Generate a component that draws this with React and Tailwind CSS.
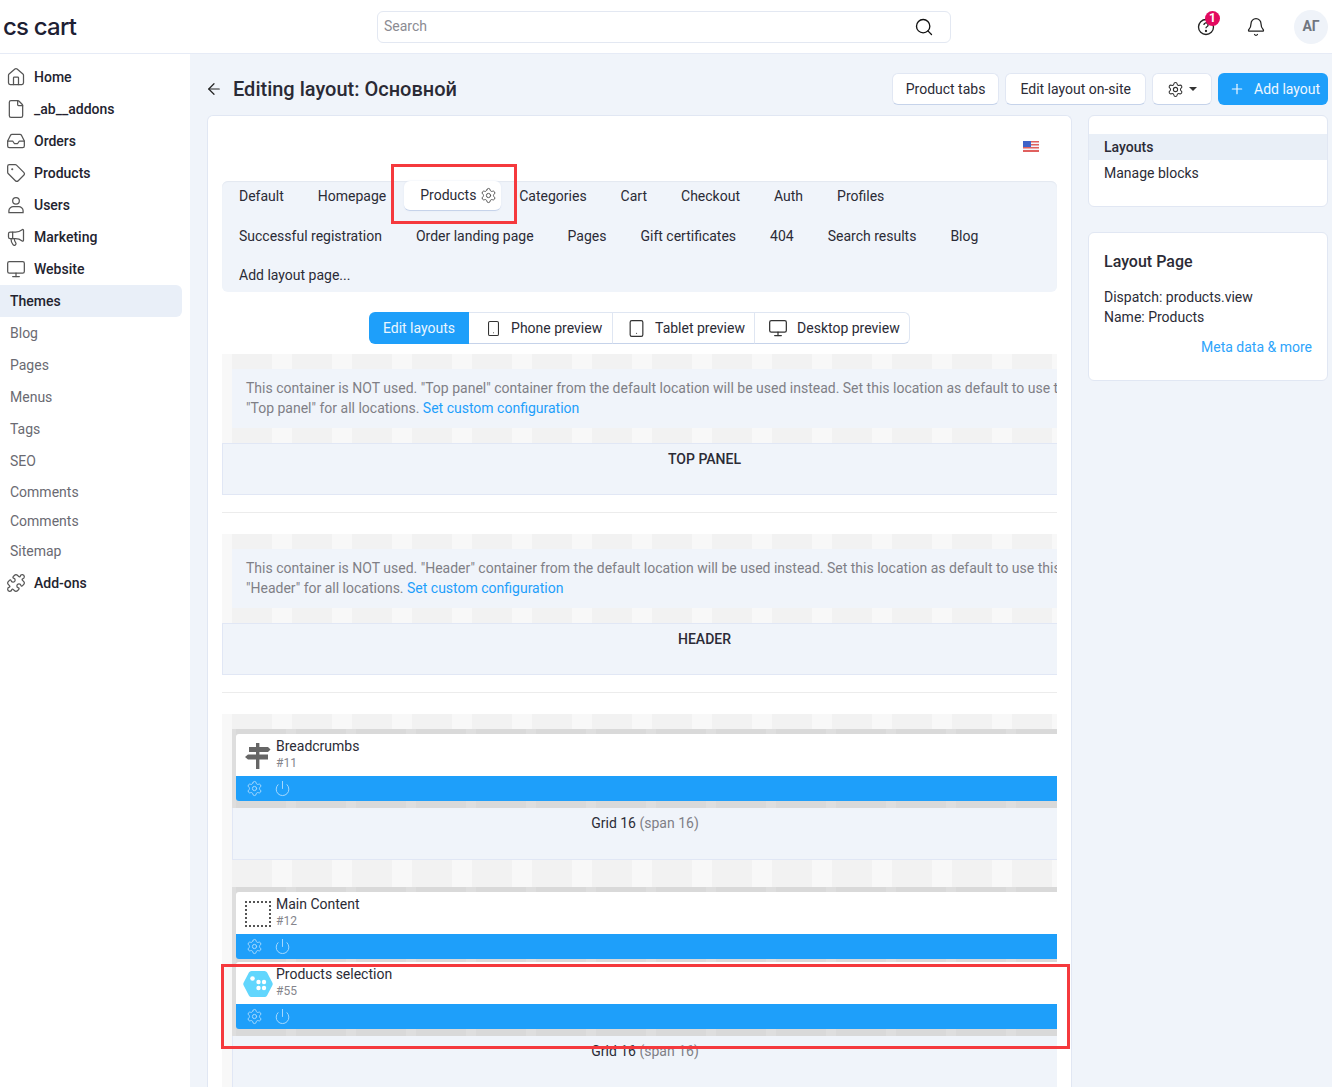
import React from "react";
import { Search, Bell, ArrowLeft, Plus, Settings, Power, House, File, Inbox, Tag, Megaphone, Monitor, Puzzle, Smartphone, Tablet } from "lucide-react";

const UserIcon = (p) => (
  <svg viewBox="0 0 24 24" fill="none" stroke="currentColor" strokeWidth="1.5" {...p}>
    <circle cx="12" cy="7" r="4" />
    <path d="M3.5 21v-2.5c0-2.6 3-4.5 5-4.5h7c2 0 5 1.9 5 4.5V21z" />
  </svg>
);

const HelpIcon = () => (
  <svg viewBox="0 0 24 24" width="20" height="20" fill="none" stroke="#222" strokeWidth="1.6">
    <circle cx="12" cy="12" r="9" />
    <path d="M9.5 9.5a2.5 2.5 0 1 1 3.6 2.2c-.8.4-1.1.9-1.1 1.8" />
    <circle cx="12" cy="16.8" r=".6" fill="#222" />
  </svg>
);

const Signpost = () => (
  <svg viewBox="0 0 28 28" width="28" height="28" fill="#666">
    <rect x="12" y="1" width="3.4" height="26" />
    <path d="M5 5h19l2.5 2.5L24 10H5z" />
    <path d="M24 12.5H4L1 15l3 2.500h20z" />
  </svg>
);

const HexIcon = () => (
  <svg viewBox="0 0 30 28" width="30" height="28">
    <path d="M8.500 1h13a3 3 0 0 1 2.600 1.500l5.200 10a3 3 0 0 1 0 3l-5.200 10a3 3 0 0 1-2.600 1.500h-13a3 3 0 0 1-2.600-1.500l-5.200-10a3 3 0 0 1 0-3l5.200-10A3 3 0 0 1 8.500 1z" fill="#61d6fd" />
    <g fill="#fff">
      <circle cx="9.500" cy="8.500" r="2.300" />
      <circle cx="15.500" cy="12" r="2.200" />
      <circle cx="21" cy="12" r="2.200" />
      <circle cx="15.500" cy="18" r="2.200" />
      <circle cx="21" cy="18" r="2.200" />
    </g>
  </svg>
);

const mainNav = [
  ["Home", House],
  ["_ab__addons", File],
  ["Orders", Inbox],
  ["Products", Tag],
  ["Users", UserIcon],
  ["Marketing", Megaphone],
  ["Website", Monitor],
];

function NavItem({ label, Icon }) {
  return (
    <div className="flex h-8 items-center">
      <Icon width={20} height={20} strokeWidth={1.5} className="ml-[6px] mr-2 shrink-0 text-[#555]" />
      <span className="font-medium text-[#23232f]">{label}</span>
    </div>
  );
}

function SubItem({ label, h = "h-8" }) {
  return <div className={`flex ${h} items-center pl-[10px] text-[#6a6a72]`}>{label}</div>;
}

function Sidebar() {
  return (
    <aside className="w-[190px] shrink-0 bg-white pt-[7px]">
      {mainNav.map(([label, Icon]) => (
        <NavItem key={label} label={label} Icon={Icon} />
      ))}
      <div className="flex h-8 w-[182px] items-center rounded-r-md bg-[#e9eff8] pl-[10px] font-medium text-[#23232f]">Themes</div>
      <SubItem label="Blog" />
      <SubItem label="Pages" />
      <SubItem label="Menus" />
      <SubItem label="Tags" />
      <SubItem label="SEO" />
      <SubItem label="Comments" h="h-[30px]" />
      <SubItem label="Comments" h="h-[28px]" />
      <SubItem label="Sitemap" />
      <NavItem label="Add-ons" Icon={Puzzle} />
    </aside>
  );
}

function Header() {
  return (
    <header className="flex h-[54px] shrink-0 items-center border-b border-[#e6ebf6] bg-white">
      <div className="w-[377px] shrink-0 pl-[3px] font-['Inter',sans-serif] text-[24px] leading-none font-medium tracking-[-0.8px] text-[#1d2033]">cs cart</div>
      <div className="flex h-[32px] w-[574px] shrink-0 items-center justify-between rounded-md border border-[#e3e8f2] pr-4 pl-[6px] text-[#8b8b92]">
        <span>Search</span>
        <Search width={20} height={20} strokeWidth={1.6} className="text-[#111]" />
      </div>
      <div className="ml-auto flex items-center pr-1">
        <div className="relative mr-[30px] flex h-5 w-5 items-center justify-center">
          <HelpIcon />
          <span className="absolute top-[-6px] left-[9px] flex h-[15px] w-[15px] items-center justify-center rounded-full bg-[#e20a5f] text-[12px] leading-none font-bold text-white">1</span>
        </div>
        <Bell width={20} height={20} strokeWidth={1.5} className="mr-7 text-[#222]" />
        <div className="flex h-[34px] w-[34px] items-center justify-center rounded-full bg-[#eff3f9] text-[14px] font-bold text-[#71767f]">АГ</div>
      </div>
    </header>
  );
}

const btn = "flex h-8 items-center rounded-md border border-[#e1e7f3] border-b-[#c6d3ea] bg-white text-[#2b2b36]";

function TitleRow() {
  return (
    <div className="flex h-8 items-center">
      <ArrowLeft width={18} height={18} strokeWidth={1.6} className="mr-[10px] ml-[-2px] text-[#222]" />
      <h1 className="text-[20px] font-medium text-[#2a2a35]">Editing layout: Основной</h1>
      <div className="ml-auto flex gap-[6px]">
        <div className={`${btn} px-[13px]`}>Product tabs</div>
        <div className={`${btn} px-[14px]`}>Edit layout on-site</div>
        <div className={`${btn} w-[60px] justify-center gap-[5px]`}>
          <Settings width={17} height={17} strokeWidth={1.5} className="text-[#333]" />
          <span className="h-0 w-0 border-x-[4px] border-t-[4px] border-x-transparent border-t-[#333]" />
        </div>
        <div className="flex h-8 w-[110px] items-center gap-[9px] rounded-md bg-[#1e9ffa] pl-[11px] text-[#eef7ff]">
          <Plus width={16} height={16} strokeWidth={1.8} />
          <span>Add layout</span>
        </div>
      </div>
    </div>
  );
}

function Flag() {
  return (
    <svg viewBox="0 0 16 11" width="16" height="11">
      <rect width="16" height="11" fill="#f4f4f8" />
      <g fill="#e0605e">
        <rect width="16" height="1.500" />
        <rect y="3" width="16" height="1.500" />
        <rect y="6" width="16" height="1.500" />
        <rect y="9" width="16" height="2" />
      </g>
      <rect width="8" height="6" fill="#3f63c8" />
    </svg>
  );
}

function Tab({ children }) {
  return <div className="flex h-10 items-center px-[17px] pb-[10px] text-[#2b2b36]">{children}</div>;
}

function Tabs() {
  const row1a = ["Default", "Homepage"];
  const row1b = ["Cart", "Checkout", "Auth", "Profiles"];
  const row2 = ["Successful registration", "Order landing page", "Pages", "Gift certificates", "404", "Search results", "Blog"];
  return (
    <div className="relative rounded-md bg-[#f0f4fa] pb-[1px] shadow-[inset_0_1px_1px_#e3e8f0]">
      <div className="flex h-10">
        {row1a.map((t) => <Tab key={t}>{t}</Tab>)}
        <div className="mr-[1px] ml-[1px] flex h-[30px] w-[97px] shrink-0 items-center gap-1 rounded-md border-b border-[#c6d3ea] bg-white pl-4 text-[#2b2b36] shadow-[0_0_2px_#dfe6f2]">
          Products
          <Settings width={17} height={17} strokeWidth={1.4} className="text-[#555]" />
        </div>
        <Tab>Categories</Tab>
        {row1b.map((t) => <Tab key={t}>{t}</Tab>)}
      </div>
      <div className="flex h-10">{row2.map((t) => <Tab key={t}>{t}</Tab>)}</div>
      <div className="flex h-[30px]">
        <div className="flex h-[30px] items-center px-[17px] pb-[1px] text-[#2b2b36]">Add layout page...</div>
      </div>
      <div className="pointer-events-none absolute top-[-17px] left-[169px] h-[60px] w-[126px] border-[3px] border-[#f5393d]" />
    </div>
  );
}

function PreviewSwitch() {
  const item = "flex h-8 items-center gap-[9px] border-y border-r border-[#dfe6f2] border-b-[#c6d3ea] bg-white text-[#2b2b36]";
  return (
    <div className="mt-[20px] flex justify-center">
      <div className="flex h-8 items-center rounded-l-md bg-[#1e9ffa] px-[14px] text-[#eaf6ff]">Edit layouts</div>
      <div className={`${item} w-[144px] pl-4`}>
        <Smartphone width={17} height={17} strokeWidth={1.5} className="text-[#333]" />
        Phone preview
      </div>
      <div className={`${item} w-[142px] pl-[14px]`}>
        <Tablet width={19} height={19} strokeWidth={1.5} className="text-[#333]" />
        Tablet preview
      </div>
      <div className={`${item} w-[155px] rounded-r-md pl-[13px]`}>
        <Monitor width={20} height={20} strokeWidth={1.5} className="text-[#333]" />
        Desktop preview
      </div>
    </div>
  );
}

const stripes = "bg-[#f2f2f2] bg-[linear-gradient(90deg,#f8f8f8_10px,#f2f2f2_10px,#f2f2f2_50px,#f8f8f8_50px)] bg-[length:60px_100%]";
const darkStripes = "bg-[#d9d9d9] bg-[linear-gradient(90deg,#dedede_4px,#d9d9d9_4px,#d9d9d9_54px,#dedede_54px)] bg-[length:60px_100%]";

function Unused({ name, title, center }) {
  return (
    <div>
      <div className={`${stripes} pt-[15px] pb-[15px] pl-[10px]`}>
        <div className="h-[59px] overflow-hidden whitespace-nowrap bg-[#f0f4fa] pt-[9px] pl-[14px] leading-5 text-[#7f7f86]">
          This container is NOT used. "{name}" container from the default location will be used instead. Set this location as default to use this container for all locations.
          <br />
          "{name}" for all locations. <span className="text-[#1e9ffa]">Set custom configuration</span>
        </div>
      </div>
      <div className="h-[52px] border-x border-b border-t border-[#e1e7f5] border-r-0 bg-[#f0f4fa] pt-[5px] font-medium text-[#2b2b36]" >
        <div className={center}>{title}</div>
      </div>
    </div>
  );
}

function Block({ icon, name, id }) {
  return (
    <div className="overflow-hidden rounded-l-[3px]">
      <div className="flex h-[42px] bg-white">
        <div className="flex w-10 shrink-0 items-center justify-center pt-[2px] pl-[4px]">{icon}</div>
        <div>
          <div className="mt-[3px] leading-[18px] text-[#2b2b36]">{name}</div>
          <div className="text-[12px] leading-[17px] text-[#85858c]">{id}</div>
        </div>
      </div>
      <div className="flex h-[25px] items-center gap-[11px] bg-[#1e9ffa] pl-[10px] text-[#a6d9fd]">
        <Settings width={17} height={17} strokeWidth={1.4} />
        <Power width={17} height={17} strokeWidth={1.4} />
      </div>
    </div>
  );
}

function GridLabel() {
  return (
    <div className="text-center text-[#2b2b36]">
      Grid 16 <span className="text-[#7f7f86]">(span 16)</span>
    </div>
  );
}

function Canvas() {
  return (
    <div className={`${stripes} h-[400px] pt-[15px] pl-[10px]`}>
      <div className={`${darkStripes} px-[4px] pt-[5px] pb-[7px] pr-0`}>
        <Block icon={<Signpost />} name="Breadcrumbs" id="#11" />
      </div>
      <div className="h-[52px] border-b border-l border-[#e1e7f5] bg-[#f0f4fa] pt-[5px]">
        <GridLabel />
      </div>
      <div className="h-[27px]" />
      <div className={`${darkStripes} relative pt-[5px] pb-[7px] pl-[4px]`}>
        <Block icon={<div className="h-[26px] w-[26px] border-2 border-dotted border-[#555]" />} name="Main Content" id="#12" />
        <div className="mt-[3px]">
          <Block icon={<HexIcon />} name="Products selection" id="#55" />
        </div>
      </div>
      <div className="h-[60px] border-l border-[#e1e7f5] bg-[#f0f4fa] pt-[5px]">
        <GridLabel />
      </div>
    </div>
  );
}

function MainCard() {
  return (
    <section className="relative h-[1000px] min-w-0 flex-1 rounded-t-md border border-b-0 border-[#e1e7f3] bg-white px-[14px] pt-[25px]">
      <div className="flex h-[11px] justify-end pr-[18px]"><Flag /></div>
      <div className="mt-[29px]"><Tabs /></div>
      <PreviewSwitch />
      <div className="mt-[10px] w-full overflow-hidden">
        <Unused name="Top panel" title="TOP PANEL" center="pl-[445px]" />
        <div className="mt-[17px] mb-[21px] h-px bg-[#ececec]" />
        <Unused name="Header" title="HEADER" center="pl-[455px]" />
        <div className="mt-[17px] mb-[21px] h-px bg-[#ececec]" />
        <Canvas />
      </div>
      <div className="pointer-events-none absolute top-[848px] left-[13px] h-[85px] w-[849px] border-[3px] border-[#f5393d]" />
    </section>
  );
}

function RightCol() {
  return (
    <aside className="flex w-[240px] shrink-0 flex-col gap-[25px]">
      <div className="h-[92px] rounded-md border border-[#e1e7f3] bg-white pt-[18px]">
        <div className="flex h-[26px] items-center bg-[#e9eff7] pl-[15px] font-medium text-[#2b2b36]">Layouts</div>
        <div className="pt-[3px] pl-[15px] leading-[20px] text-[#2b2b36]">Manage blocks</div>
      </div>
      <div className="h-[149px] rounded-md border border-[#e1e7f3] bg-white px-[15px] pt-[18px]">
        <div className="text-[16px] leading-[22px] font-medium text-[#2b2b36]">Layout Page</div>
        <div className="mt-[14px] leading-5 text-[#2b2b36]">Dispatch: products.view<br />Name: Products</div>
        <div className="mt-[10px] text-right leading-5 text-[#2ea4fb]">Meta data &amp; more</div>
      </div>
    </aside>
  );
}

export default function App() {
  return (
    <div className="flex h-[1087px] flex-col overflow-hidden bg-[#f0f4fa] font-['Roboto',sans-serif] text-[14px]">
      <Header />
      <div className="flex min-h-0 flex-1">
        <Sidebar />
        <main className="min-w-0 flex-1 pt-[19px] pr-1 pl-[17px]">
          <TitleRow />
          <div className="mt-[10px] flex gap-4">
            <MainCard />
            <RightCol />
          </div>
        </main>
      </div>
    </div>
  );
}
